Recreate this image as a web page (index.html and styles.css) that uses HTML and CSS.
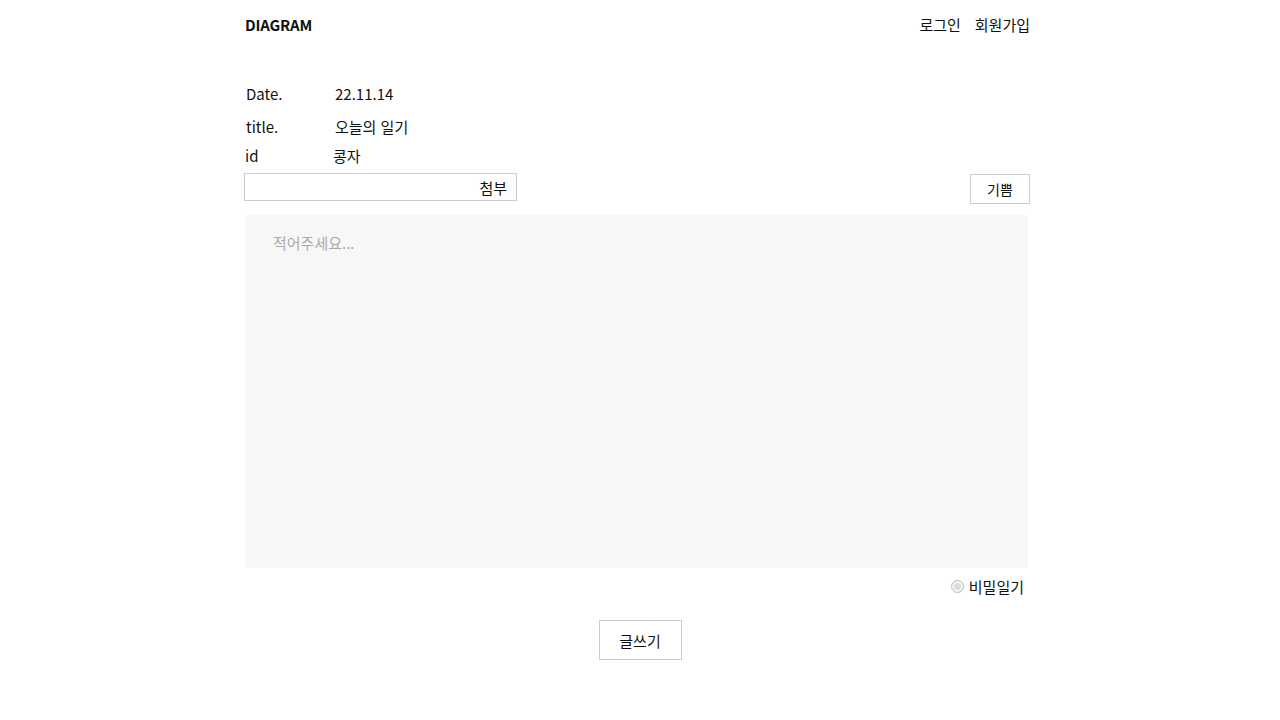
FILE: index.html
```html
<!DOCTYPE html>
<html lang="ko">
<head>
  <meta charset="utf-8">
  <title>DIAGRAM</title>
  <link rel="stylesheet" href="styles.css">
</head>
<body>
<div class="wrap">
  <header class="header">
    <div class="logo">DIAGRAM</div>
    <nav class="nav">
      <a href="#">로그인</a>
      <a href="#">회원가입</a>
    </nav>
  </header>

  <form class="write-form">
    <div class="info-row row-date">
      <span class="label">Date.</span>
      <span class="value">22.11.14</span>
    </div>
    <div class="info-row row-title">
      <span class="label">title.</span>
      <span class="value">오늘의 일기</span>
    </div>
    <div class="info-row row-id">
      <span class="label">id</span>
      <span class="value">콩자</span>
    </div>

    <div class="tools">
      <label class="file-box">
        <span class="file-btn">첨부</span>
      </label>
      <button type="button" class="mood-btn">기쁨</button>
    </div>

    <textarea class="content" placeholder="적어주세요..."></textarea>

    <div class="secret">
      <label><span class="radio"></span>비밀일기</label>
    </div>

    <div class="submit">
      <button type="button" class="submit-btn">글쓰기</button>
    </div>
  </form>
</div>
</body>
</html>
```

FILE: styles.css
```css
body {
  margin: 0;
  font-family: "Noto Sans CJK KR", "Noto Sans", sans-serif;
  background-color: #fff;
  color: #111;
  font-size: 14px;
}

.wrap {
  width: 785px;
  margin: 0 0 0 245px;
}

.header {
  display: flex;
  justify-content: space-between;
  align-items: center;
  height: 49px;
}

.logo {
  font-size: 15px;
  font-weight: 700;
  letter-spacing: -0.2px;
}

.nav {
  display: flex;
  gap: 14px;
  font-size: 15px;
}

.nav a {
  color: #111;
  text-decoration: none;
}

.write-form {
  padding-top: 34px;
}

.info-row {
  display: flex;
  font-size: 15px;
  line-height: 22px;
}

.row-date, .row-title {
  padding-left: 1px;
}

.row-title {
  margin-top: 11px;
}

.row-id {
  margin-top: 7px;
}

.label {
  width: 89px;
}

.row-id .label {
  width: 88px;
}

.tools {
  display: flex;
  justify-content: space-between;
  align-items: flex-start;
  margin-top: 6px;
  margin-left: -1px;
}

.file-box {
  display: flex;
  justify-content: flex-end;
  align-items: center;
  width: 262px;
  height: 26px;
  border: 1px solid #ccc;
  padding-right: 9px;
}

.file-btn {
  font-size: 15px;
}

.mood-btn {
  margin-top: 1px;
  width: 60px;
  height: 30px;
  background: #fff;
  border: 1px solid #ccc;
  font-family: inherit;
  font-size: 14px;
  color: #111;
  padding: 0;
}

.content {
  display: block;
  width: 783px;
  height: 353px;
  margin-top: 11px;
  padding: 17px 28px;
  box-sizing: border-box;
  border: none;
  background-color: #f7f7f7;
  font-family: inherit;
  font-size: 15px;
  resize: none;
  outline: none;
}

.content::placeholder {
  color: #aaa;
}

.secret {
  display: flex;
  justify-content: flex-end;
  padding-right: 6px;
  margin-top: 8px;
  font-size: 15px;
}

.secret label {
  display: flex;
  align-items: center;
  gap: 5px;
}

.radio {
  width: 11px;
  height: 11px;
  border: 1px solid #bbb;
  border-radius: 50%;
  background: radial-gradient(circle, #ddd 0 3px, #f3f3f3 4px);
}

.submit {
  display: flex;
  justify-content: center;
  padding-left: 5px;
  margin-top: 23px;
}

.submit-btn {
  width: 83px;
  height: 40px;
  background: #fff;
  border: 1px solid #ccc;
  font-family: inherit;
  font-size: 15px;
  color: #111;
  padding: 0;
}
```
